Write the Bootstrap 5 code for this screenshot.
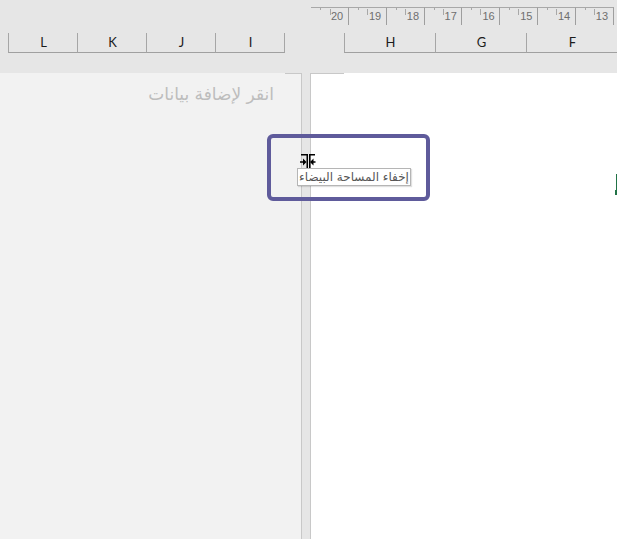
<!DOCTYPE html>
<html lang="ar">
<head>
<meta charset="utf-8">
<title>Sheet</title>
<link rel="stylesheet" href="https://cdn.jsdelivr.net/npm/bootstrap@5.3.0/dist/css/bootstrap.min.css">
<style>
html,body{margin:0;height:539px;overflow:hidden;background:#e6e6e6}
.sheet{position:relative;width:617px;height:539px;overflow:hidden;background:#e6e6e6}
.ruler-row{height:33px;padding-left:311px;flex-wrap:nowrap}
.ruler-cell{flex:0 0 auto;height:18px;margin-top:7px;border-top:1px solid #a8a8a8;border-right:1px solid #9e9e9e;position:relative;font:11px/12px "Liberation Sans",sans-serif;color:#6e6e6e;background-image:linear-gradient(#a8a8a8,#a8a8a8),linear-gradient(#a8a8a8,#a8a8a8);background-size:1px 2px,1px 6px;background-repeat:no-repeat}
.ruler-cell span{display:block;position:absolute;left:20px;top:2px}
.rw37{width:37.8px;background-position:9px 0,18px 1px}
.rw0{width:38px;background-position:9px 0,19px 1px}
.head-row{height:20px;flex-wrap:nowrap}
.head-left{width:285px;flex:0 0 auto;padding-left:8px}
.head-gap{width:59px;flex:0 0 auto}
.col-head{flex:0 0 auto;height:20px;border-left:1px solid #a6a6a6;border-bottom:1px solid #a0a0a0;font:13px/19px "Lato","Liberation Sans",sans-serif;color:#1c1c1c;text-align:center;padding-left:1px}
.col-head.last{border-right:1px solid #a6a6a6;width:70px}
.cw69{width:69px}
.cw91{width:91px}
.pages{margin-top:20px;height:466px;flex-wrap:nowrap}
.page-left{width:302px;flex:0 0 auto;background:#f2f2f2;position:relative;text-align:right;padding:9px 28px 0 0;font:17px/24px "DejaVu Sans",sans-serif;color:#bdbdbd}
.page-left-corner{position:absolute;right:0;top:0;width:17px;height:1px;background:#c8c8c8}
.page-left-edge{position:absolute;right:0;top:0;width:1px;height:100%;background:#c8c8c8}
.page-gap{width:8px;flex:0 0 auto}
.page-right{flex:1 1 auto;background:#fff;border-left:1px solid #c8c8c8;position:relative}
.page-right-corner{position:absolute;left:0;top:0;width:33px;height:1px;background:#c8c8c8}
.cell-edge{position:absolute;right:0;top:101px;width:1px;height:16px;background:#217346}
.cell-fill{position:absolute;right:0;top:117px;width:2px;height:5px;background:#217346}
.highlight-box{position:absolute;left:267px;top:134px;width:163px;height:67px;border:4px solid #5f5b9b;border-radius:6px}
.cursor-icon{position:absolute;left:300px;top:154px;width:16px;height:16px}
.hint-tip{position:absolute;left:297px;top:168px;width:114px;height:18px;background:#fff;border:1px solid #b5b5b5;box-shadow:1px 1px 1px rgba(0,0,0,.12);font:12px/16px "DejaVu Sans",sans-serif;color:#555;text-align:center;white-space:nowrap;overflow:hidden;direction:rtl}
</style>
</head>
<body>
<div class="sheet">
  <div class="ruler-row d-flex">
    <div class="ruler-cell rw0"><span>20</span></div>
    <div class="ruler-cell rw37"><span>19</span></div>
    <div class="ruler-cell rw37"><span>18</span></div>
    <div class="ruler-cell rw37"><span>17</span></div>
    <div class="ruler-cell rw37"><span>16</span></div>
    <div class="ruler-cell rw37"><span>15</span></div>
    <div class="ruler-cell rw37"><span>14</span></div>
    <div class="ruler-cell rw37"><span>13</span></div>
  </div>
  <div class="head-row d-flex">
    <div class="head-left d-flex">
      <div class="col-head cw69">L</div>
      <div class="col-head cw69">K</div>
      <div class="col-head cw69">J</div>
      <div class="col-head cw69 last">I</div>
    </div>
    <div class="head-gap"></div>
    <div class="d-flex">
      <div class="col-head cw91">H</div>
      <div class="col-head cw91">G</div>
      <div class="col-head cw91">F</div>
    </div>
  </div>
  <div class="pages d-flex">
    <div class="page-left" dir="rtl"><div class="page-left-corner"></div><div class="page-left-edge"></div>انقر لإضافة بيانات</div>
    <div class="page-gap"></div>
    <div class="page-right">
      <div class="page-right-corner"></div>
      <div class="cell-edge"></div>
      <div class="cell-fill"></div>
    </div>
  </div>
  <div class="highlight-box"></div>
  <svg class="cursor-icon" viewBox="0 0 16 16" aria-hidden="true">
    <path d="M1 .75H7.250V15.250H1M15 .75H9.750V15.250H15" fill="none" stroke="#000" stroke-width="1.500"/>
    <path d="M0 7.250H3V4.500L6.500 8 3 11.500V8.750H0ZM15.500 7.250H13.500V4.500L10 8 13.500 11.500V8.750H15.500Z" fill="#000"/>
  </svg>
  <div class="hint-tip">إخفاء المساحة البيضاء</div>
</div>
<script src="https://cdn.jsdelivr.net/npm/bootstrap@5.3.0/dist/js/bootstrap.bundle.min.js"></script>
</body>
</html>
